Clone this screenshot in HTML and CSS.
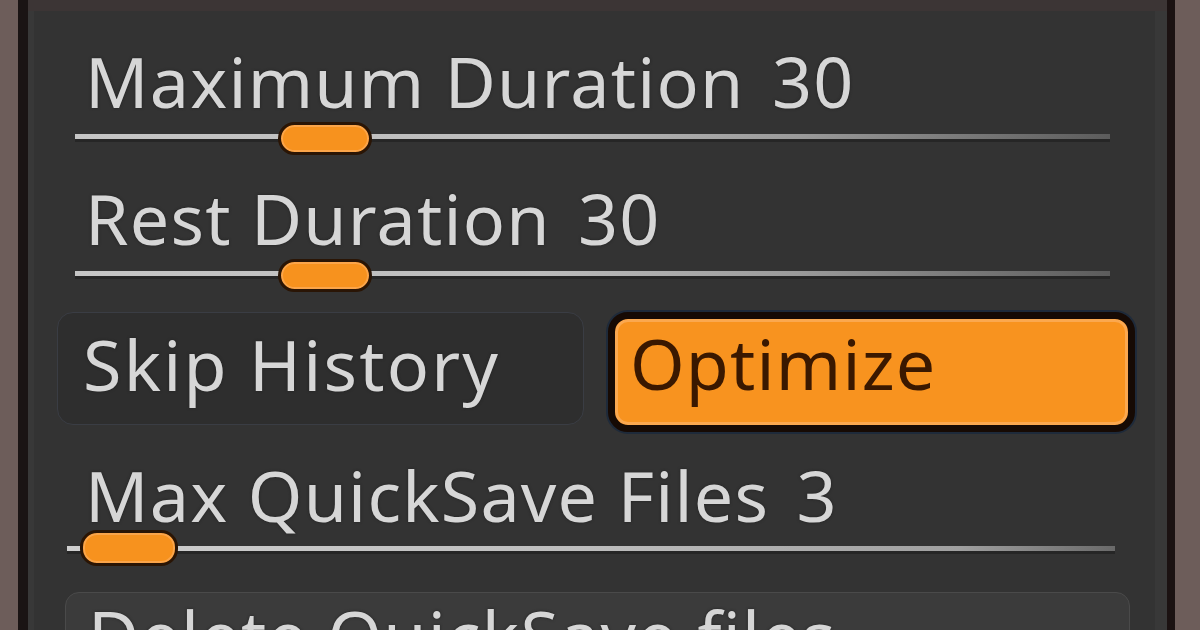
FILE: index.html
```html
<!DOCTYPE html>
<html>
<head>
<meta charset="utf-8">
<link rel="stylesheet" href="styles.css">
</head>
<body>
<div class="frame">
  <div class="panel">
    <div class="topband"></div>
    <div class="group first">
      <div class="label">Maximum Duration <span class="val">30</span></div>
      <div class="slider">
        <div class="track"></div>
        <div class="thumb" style="left:19.6%"></div>
      </div>
    </div>
    <div class="group">
      <div class="label">Rest Duration <span class="val">30</span></div>
      <div class="slider">
        <div class="track"></div>
        <div class="thumb" style="left:19.6%"></div>
      </div>
    </div>
    <div class="buttons">
      <div class="btn skip">Skip History</div>
      <div class="btn optimize">Optimize</div>
    </div>
    <div class="group">
      <div class="label">Max QuickSave Files <span class="val">3</span></div>
      <div class="slider wide">
        <div class="track"></div>
        <div class="thumb small" style="left:1.2%"></div>
      </div>
    </div>
    <div class="btn delete">Delete QuickSave files</div>
  </div>
</div>
</body>
</html>
```
FILE: styles.css
```css
html, body {
  margin: 0;
  padding: 0;
}
body {
  width: 1200px;
  height: 630px;
  overflow: hidden;
  background: #6d5d5a;
  font-family: "Noto Sans", "Open Sans", sans-serif;
}
.frame {
  height: 630px;
  padding: 0 25px 0 18px;
}
.panel {
  height: 630px;
  background: #333333;
  border-left: 10px solid #1a1414;
  border-right: 8px solid #1b1212;
  overflow: hidden;
  box-shadow: inset 18px 0 0 -12px #383838, inset -24px 0 0 -12px #383838;
}
.topband {
  height: 11px;
  background: #3c3535;
}
.group {
  margin-top: 25px;
}
.group.first {
  margin-top: 32px;
}
.label {
  height: 76px;
  line-height: 76px;
  font-size: 70px;
  color: #d6d6d6;
  margin-left: 57px;
  white-space: nowrap;
  letter-spacing: 1.2px;
  text-shadow: 0 0 3px #202020;
}
.val {
  margin-left: 8px;
}
.slider {
  position: relative;
  height: 36px;
  margin: 0 57px 0 47px;
}
.slider.wide {
  margin: 0 52px 0 39px;
}
.track {
  position: relative;
  top: 15px;
  height: 5px;
  background: linear-gradient(to right, #c6c6c6 0%, #bcbcbc 45%, #9a9a9a 70%, #5c5c5c 100%);
  box-shadow: 0 3px 0 #262626;
}
.slider.wide .track {
  top: 13px;
  background: linear-gradient(to right, #cfcfcf 0%, #bdbdbd 50%, #a0a0a0 85%, #6a6a6a 100%);
}
.thumb {
  position: absolute;
  top: 3px;
  width: 88px;
  height: 27px;
  border: 3px solid #2a1505;
  border-radius: 17px;
  background: #f7921e;
  box-shadow: inset 0 0 0 2px #fba54a;
}
.thumb.small {
  top: -3px;
  width: 92px;
  height: 30px;
}
.buttons {
  display: grid;
  grid-template-columns: 1fr 1fr;
  column-gap: 24px;
  align-items: start;
  margin: 20px 32px 0 29px;
}
.btn {
  font-size: 70px;
  white-space: nowrap;
  box-sizing: border-box;
  letter-spacing: 1.2px;
}
.skip {
  height: 113px;
  line-height: 88px;
  padding: 7px 0 0 25px;
  color: #d6d6d6;
  background: #2e2e2e;
  border: 1px solid #3a3d44;
  border-radius: 16px;
  text-shadow: 0 0 3px #202020;
  letter-spacing: 2.2px;
}
.optimize {
  height: 120px;
  line-height: 88px;
  padding: 0 0 0 15px;
  color: #3a1800;
  background: #f8931f;
  border: 7px solid #160a04;
  border-radius: 20px;
  box-shadow: inset 0 0 0 3px #fba84f, 0 0 0 2px #1e2a3a;
}
.delete {
  margin: 23px 37px 0 37px;
  height: 80px;
  line-height: 76px;
  padding: 4px 0 0 22px;
  color: #d6d6d6;
  background: #3b3b3b;
  border: 1px solid #4a4a4a;
  border-radius: 14px;
  text-shadow: 0 0 3px #202020;
}
```
